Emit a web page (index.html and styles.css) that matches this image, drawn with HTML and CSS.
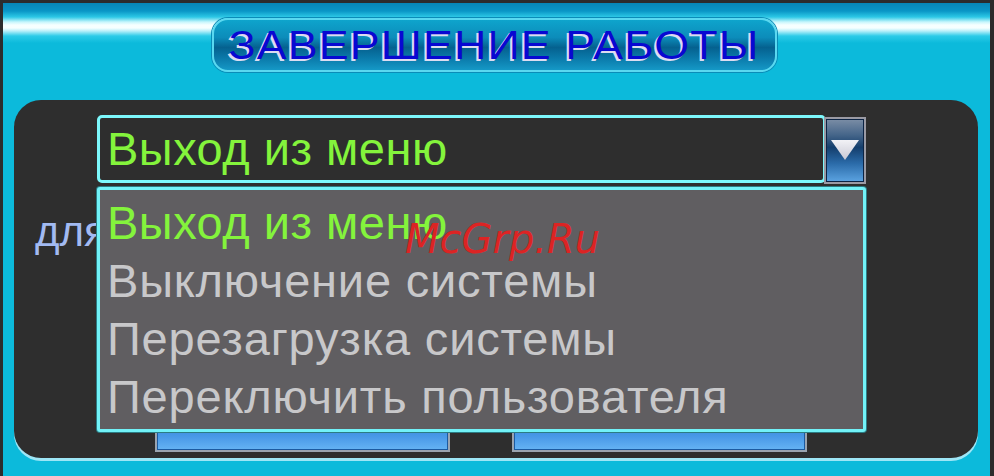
FILE: index.html
```html
<!doctype html>
<html>
<head>
    <meta charset="utf-8"/>
    <title>Завершение работы</title>
    <link rel="stylesheet" href="styles.css">
</head>
<body>

<div class="screen">
    <div class="head">
        <div class="title"><span>ЗАВЕРШЕНИЕ РАБОТЫ</span></div>
    </div>

    <div class="panel">
        <div class="select">
            <div class="sel-field">Выход из меню</div>
            <div class="sel-btn">
                <svg width="38" height="63" viewBox="0 0 38 63">
                    <defs>
                        <linearGradient id="tri" x1="0" y1="0" x2="0" y2="1">
                            <stop offset="0" stop-color="#f2f2f6"/>
                            <stop offset="1" stop-color="#c8c8d4"/>
                        </linearGradient>
                    </defs>
                    <polygon points="5,21 33,21 19,41" fill="url(#tri)"/>
                </svg>
            </div>
        </div>

        <div class="row-label">для выхода</div>

        <div class="buttons">
            <div class="btn"></div>
            <div class="btn"></div>
        </div>

        <!-- open list of the select, lies over the rest -->
        <ul class="drop">
            <li class="on">Выход из меню</li>
            <li>Выключение системы</li>
            <li>Перезагрузка системы</li>
            <li>Переключить пользователя</li>
        </ul>
    </div>

    <div class="mark">McGrp.Ru</div>
</div>

</body>
</html>
```

FILE: styles.css
```css
*{margin:0;padding:0}
html,body{width:994px;height:476px;overflow:hidden}
body{background:#2c2c2c;font-family:"Liberation Sans",Arial,sans-serif}

.screen{position:relative;margin:3px 4px 0 3px;height:473px;padding:15px 12px 0 11px;box-sizing:border-box;
    background:linear-gradient(to bottom,#0786b6 0,#0a96c6 8px,#2cc8e6 14px,#c8f6fc 19px,#f6ffff 22px,#f6ffff 25px,#b8f0fa 28px,#2ccbe8 33px,#0cbadb 40px,#0cbadb 100%)}

.head{display:flex;justify-content:center;padding-right:3px}
.title{width:561px;height:50px;border:2px solid #5ad8f0;border-radius:16px;overflow:hidden;
    background:linear-gradient(to bottom,#0ea4cc 0,#0c8cba 35%,#05618f 55%,#0a78a8 75%,#1598c6 100%);
    color:#0808d2;font-size:40px;line-height:50px;text-align:center;
    text-shadow:-2px 2px 0 #dcdcf0;box-shadow:0 0 0 1px #0a8cb8}
.title span{display:inline-block;letter-spacing:1px;transform:scaleX(1.12)}

.panel{position:relative;margin-top:28px;height:358px;background:#2e2e2e;border-radius:27px;
    box-shadow:0 3px 0 #9ee6f6;display:flex;flex-direction:column;padding:15px 0 6px 83px;box-sizing:border-box}

.select{display:flex;align-items:flex-start}
.sel-field{width:729px;height:68px;box-sizing:border-box;border:3px solid #7cf8fc;border-radius:5px;
    color:#84f43c;font-size:47px;line-height:62px;letter-spacing:0.5px;padding-left:7px}
.sel-btn{width:42px;height:67px;margin:2px 0 0 -2px;box-sizing:border-box;border:2px solid #9a9aa4;
    background:linear-gradient(to bottom,#7c8ea6 0,#46668a 25%,#143e6c 45%,#2a6aa8 70%,#5ca4e2 100%);
    box-shadow:inset 0 0 0 1px #0c2444}
.sel-btn svg{display:block}

.row-label{margin:26px 0 0 -62px;color:#a2baf2;font-size:42px;line-height:44px}

.buttons{margin-top:auto;display:flex;gap:62px;padding-left:58px}
.btn{width:295px;height:36px;box-sizing:border-box;border:2px solid #9aa4b0;
    background:linear-gradient(to bottom,#2a7ed4 0,#4a9ae8 60%,#66b4f4 100%);box-shadow:inset 0 0 0 1px #1c5aa0}

.drop{position:absolute;left:83px;top:87px;width:769px;height:245px;box-sizing:border-box;list-style:none;
    background:#605e61;border:3px solid #72f2f8;border-radius:3px;padding:4px 0 0 7px;box-shadow:0 0 0 1px #2c7c84}
.drop li{color:#c8c8ca;font-size:47px;line-height:58px;letter-spacing:0.8px;white-space:nowrap}
.drop li.on{color:#84f43c;letter-spacing:0.5px}

.mark{position:absolute;left:402px;top:214px;color:#dc2424;font-family:"DejaVu Sans",sans-serif;font-style:italic;font-size:40px;line-height:44px}
```
